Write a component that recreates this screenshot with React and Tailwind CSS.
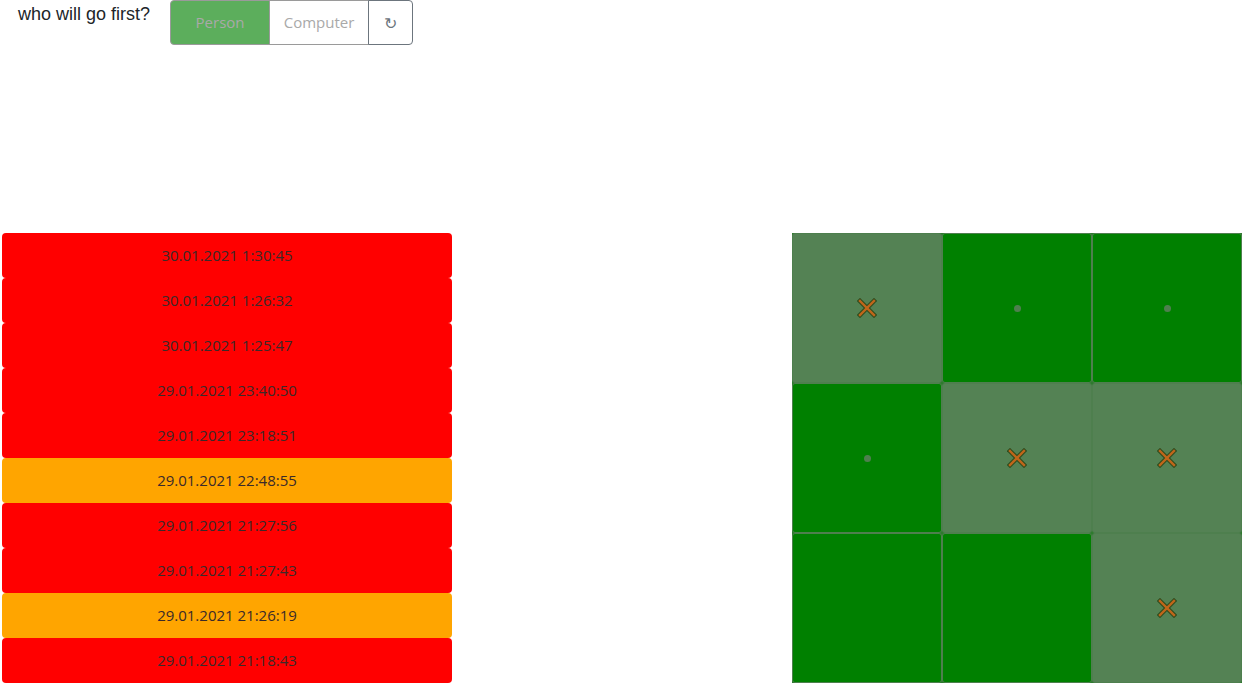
import React from 'react';

const history = [
  { time: '30.01.2021 1:30:45', color: 'bg-[#ff0000]' },
  { time: '30.01.2021 1:26:32', color: 'bg-[#ff0000]' },
  { time: '30.01.2021 1:25:47', color: 'bg-[#ff0000]' },
  { time: '29.01.2021 23:40:50', color: 'bg-[#ff0000]' },
  { time: '29.01.2021 23:18:51', color: 'bg-[#ff0000]' },
  { time: '29.01.2021 22:48:55', color: 'bg-[#ffa500]' },
  { time: '29.01.2021 21:27:56', color: 'bg-[#ff0000]' },
  { time: '29.01.2021 21:27:43', color: 'bg-[#ff0000]' },
  { time: '29.01.2021 21:26:19', color: 'bg-[#ffa500]' },
  { time: '29.01.2021 21:18:43', color: 'bg-[#ff0000]' },
];

// x = played, o = empty, null = nothing
const board = ['x', 'o', 'o', 'o', 'x', 'x', null, null, 'x'];

function Cross() {
  return (
    <svg width="20" height="20" viewBox="0 0 20 20">
      <g strokeLinecap="square">
        <line x1="3" y1="3" x2="17" y2="17" stroke="#2f4a1c" strokeWidth="4.5" />
        <line x1="17" y1="3" x2="3" y2="17" stroke="#2f4a1c" strokeWidth="4.5" />
        <line x1="3" y1="3" x2="17" y2="17" stroke="#c0661a" strokeWidth="2.4" />
        <line x1="17" y1="3" x2="3" y2="17" stroke="#c0661a" strokeWidth="2.4" />
      </g>
    </svg>
  );
}

export default function App() {
  return (
    <div className="min-h-[689px] bg-white" style={{ fontFamily: '"Open Sans", "Noto Sans", sans-serif' }}>
      {/* barra superior */}
      <div className="flex items-start pl-[18px]">
        <p className="mt-[2px] text-[18px] leading-[24px] text-[#212529] font-['Liberation_Sans',Arial,sans-serif]">
          who will go first?
        </p>
        <div className="ml-[20px] flex">
          <button
            type="button"
            className="h-[45px] w-[100px] rounded-l-[4px] border border-[#9a9a9a] bg-[#5cae5c] text-[15px] text-[#a9a9a9]"
          >
            Person
          </button>
          <button
            type="button"
            className="-ml-px h-[45px] w-[100px] border border-[#9a9a9a] bg-white text-[15px] text-[#a9a9a9]"
          >
            Computer
          </button>
          <button
            type="button"
            className="-ml-px h-[45px] w-[45px] rounded-r-[4px] border border-[#6c757d] bg-white text-[16px] text-[#6c757d]"
          >
            ↻
          </button>
        </div>
      </div>

      <div className="mt-[188px] flex items-start justify-between pl-[2px] pr-[6px]">
        {/* historial */}
        <div className="flex w-[450px] flex-col">
          {history.map((h, i) => (
            <div
              key={i}
              className={`${h.color} flex h-[45px] items-center justify-center rounded-[4px] text-[15px] text-[#3a2a2a]`}
            >
              {h.time}
            </div>
          ))}
        </div>

        {/* tablero */}
        <div className="grid w-[450px] grid-cols-3 bg-[#2f7a2f]">
          {board.map((c, i) => (
            <div
              key={i}
              className={`flex h-[150px] items-center justify-center rounded-[3px] border border-[#4e7f4e] ${
                c === 'x' ? 'bg-[#548254]' : 'bg-[#008000]'
              }`}
            >
              {c === 'x' && <Cross />}
              {c === 'o' && <span className="h-[7px] w-[7px] rounded-full bg-[#4f7f4f]" />}
            </div>
          ))}
        </div>
      </div>
    </div>
  );
}
